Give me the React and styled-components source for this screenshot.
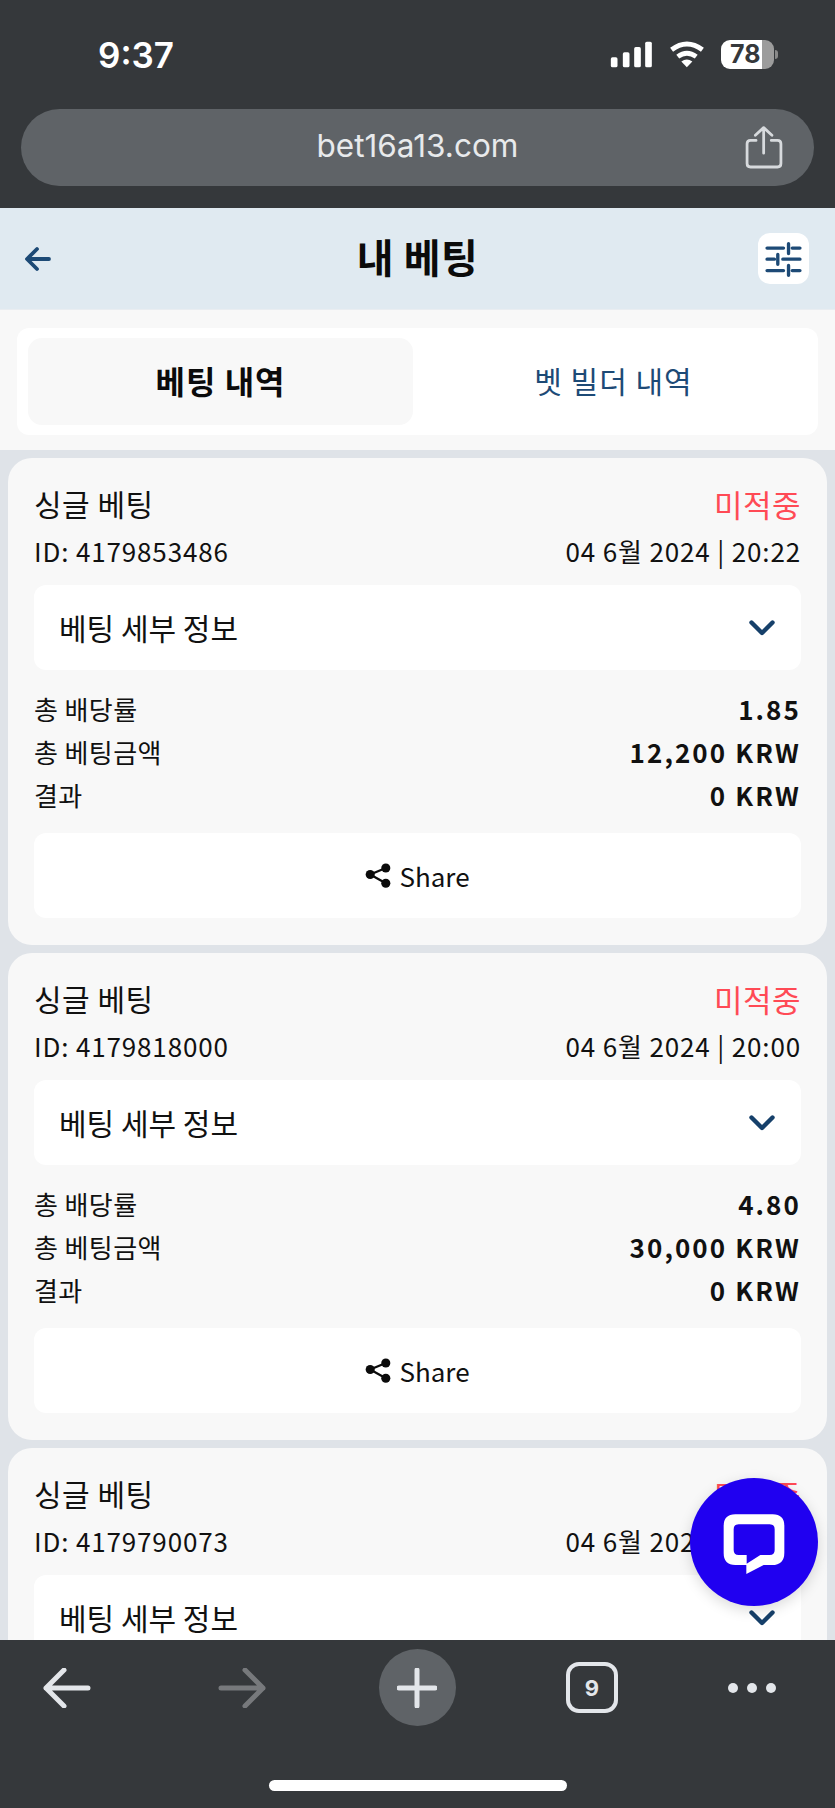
import React from 'react';
import styled, { createGlobalStyle } from 'styled-components';

const GlobalStyle = createGlobalStyle`
  html, body {
    margin: 0;
    padding: 0;
    height: 100%;
    background: #35383b;
  }
  body {
    font-family: 'Noto Sans CJK KR', 'Noto Sans', sans-serif;
    color: #111;
  }
`;

const navy = '#1d4a76';
const chrome = '#35383b';

const bets = [
  { id: '4179853486', date: '04 6월 2024 | 20:22', odds: '1.85', stake: '12,200 KRW', result: '0 KRW' },
  { id: '4179818000', date: '04 6월 2024 | 20:00', odds: '4.80', stake: '30,000 KRW', result: '0 KRW' },
  { id: '4179790073', date: '04 6월 2024 | 19:41', odds: '2.10', stake: '20,000 KRW', result: '0 KRW' },
];

const Phone = styled.div`
  position: relative;
  width: 835px;
  height: 1808px;
  display: flex;
  flex-direction: column;
  overflow: hidden;
  background: #f8f8f8;
`;

const TopChrome = styled.div`
  height: 208px;
  flex: none;
  background: ${chrome};
  padding: 0 21px;
  box-sizing: border-box;
`;

const StatusBar = styled.div`
  height: 109px;
  display: flex;
  align-items: center;
  justify-content: space-between;
  padding: 0 35px 0 77px;
`;

const Clock = styled.div`
  font-family: Inter, sans-serif;
  font-weight: 600;
  font-size: 35px;
  color: #fff;
`;

const StatusIcons = styled.div`
  display: flex;
  align-items: center;
  gap: 16px;
`;

const Battery = styled.div`
  position: relative;
  width: 53px;
  height: 29px;
  border-radius: 9px;
  background: linear-gradient(to right, #fff 78%, #9c9c9c 78%);
  font-family: Inter, sans-serif;
  font-weight: 700;
  font-size: 25px;
  line-height: 29px;
  color: ${chrome};
  padding-left: 9px;
  box-sizing: border-box;
  margin-right: 5px;
  &::after {
    content: '';
    position: absolute;
    right: -4px;
    top: 10px;
    width: 3px;
    height: 9px;
    border-radius: 0 3px 3px 0;
    background: #8a8a8a;
  }
`;

const UrlBar = styled.div`
  position: relative;
  height: 77px;
  box-sizing: border-box;
  padding-bottom: 4px;
  border-radius: 39px;
  background: #5f6367;
  display: flex;
  align-items: center;
  justify-content: center;
  font-family: Inter, sans-serif;
  font-size: 31.5px;
  color: #e8eaec;
`;

const UrlShare = styled.div`
  position: absolute;
  right: 31px;
  top: 17px;
  line-height: 0;
`;

const Header = styled.div`
  height: 102px;
  flex: none;
  background: #e0eaf1;
  display: flex;
  align-items: center;
  justify-content: space-between;
  padding: 0 26px 0 25px;
  box-sizing: border-box;
  border-bottom: 1px solid #e9edf1;
  position: relative;
`;

const Title = styled.div`
  position: absolute;
  left: 0;
  right: 0;
  top: 18px;
  text-align: center;
  font-weight: 700;
  font-size: 40px;
  line-height: 60px;
  letter-spacing: 0.5px;
  color: #0b0b0b;
`;

const FilterButton = styled.div`
  width: 51px;
  height: 51px;
  border-radius: 12px;
  background: #fff;
  display: flex;
  align-items: center;
  justify-content: center;
`;

const TabStrip = styled.div`
  flex: none;
  height: 140px;
  box-sizing: border-box;
  padding: 18px 17px 15px;
  background: #f8f8f8;
`;

const TabPanel = styled.div`
  height: 107px;
  box-sizing: border-box;
  padding: 10px 11px;
  border-radius: 12px;
  background: #fff;
  display: flex;
`;

const Tab = styled.div`
  flex: ${p => (p.$active ? '0 0 385px' : '1')};
  box-sizing: border-box;
  padding: 0 0 4px ${p => (p.$active ? '0' : '7px')};
  border-radius: 14px;
  background: ${p => (p.$active ? '#f8f8f8' : 'transparent')};
  color: ${p => (p.$active ? '#0b0b0b' : navy)};
  font-weight: ${p => (p.$active ? 700 : 400)};
  font-size: ${p => (p.$active ? '32px' : '30px')};
  letter-spacing: 1px;
  display: flex;
  align-items: center;
  justify-content: center;
`;

const Feed = styled.div`
  flex: 1;
  min-height: 0;
  overflow: hidden;
  background: #dfe3e8;
  padding: 8px;
  display: flex;
  flex-direction: column;
  gap: 8px;
`;

const Card = styled.div`
  flex: none;
  height: 487px;
  box-sizing: border-box;
  padding: 24px 26px 27px;
  background: #f8f8f8;
  border-radius: 24px;
`;

const SpacedRow = styled.div`
  display: flex;
  justify-content: space-between;
  align-items: center;
`;

const CardTitle = styled(SpacedRow)`
  height: 42px;
  font-size: 30px;
  letter-spacing: 0.5px;
`;

const Lost = styled.span`
  color: #ff4a55;
  font-size: 31px;
`;

const CardMeta = styled(SpacedRow)`
  height: 36px;
  margin-top: 8px;
  font-size: 26px;
  letter-spacing: 0.85px;
`;

const WhiteBox = styled.div`
  height: 85px;
  border-radius: 12px;
  background: #fff;
  display: flex;
  align-items: center;
`;

const Details = styled(WhiteBox)`
  margin-top: 17px;
  padding: 0 26px 0 25px;
  justify-content: space-between;
  font-size: 30px;
`;

const DetailsLabel = styled.span`
  padding-bottom: 2px;
`;

const Stats = styled.div`
  margin: 17px 0 17px;
`;

const StatRow = styled(SpacedRow)`
  height: 43px;
  font-size: 26px;
  letter-spacing: 0.4px;
`;

const StatValue = styled.span`
  font-weight: 600;
  letter-spacing: 2.1px;
`;

const ShareBox = styled(WhiteBox)`
  justify-content: center;
  gap: 8px;
  font-size: 26px;
`;

const ChatBubble = styled.div`
  position: absolute;
  left: 690px;
  top: 1478px;
  width: 128px;
  height: 128px;
  border-radius: 50%;
  background: #2000f0;
  box-shadow: 0 4px 14px rgba(0, 0, 0, 0.15);
`;

const BottomChrome = styled.div`
  flex: none;
  height: 168px;
  box-sizing: border-box;
  background: ${chrome};
  padding-top: 9px;
  display: flex;
  flex-direction: column;
  align-items: center;
`;

const ToolRow = styled.div`
  align-self: flex-start;
  display: grid;
  grid-template-columns: 134px 216px 134px 216px 104px;
  justify-items: center;
  align-items: center;
  height: 77px;
`;

const PlusButton = styled.div`
  width: 77px;
  height: 77px;
  border-radius: 50%;
  background: #5f6367;
  display: flex;
  align-items: center;
  justify-content: center;
`;

const TabCount = styled.div`
  width: 52px;
  height: 51px;
  box-sizing: border-box;
  border: 4px solid #e3e6ea;
  border-radius: 13px;
  display: flex;
  align-items: center;
  justify-content: center;
  font-family: Inter, sans-serif;
  font-weight: 700;
  font-size: 22px;
  color: #e3e6ea;
`;

const HomeIndicator = styled.div`
  width: 298px;
  height: 11px;
  border-radius: 6px;
  background: #fff;
  margin-top: 54px;
`;

const SignalIcon = () => (
  <svg width="43" height="27" viewBox="150 66 128 81" fill="#fff">
    <rect x="152" y="115" width="20" height="30" rx="5" />
    <rect x="188" y="100" width="20" height="45" rx="5" />
    <rect x="222" y="84" width="20" height="61" rx="5" />
    <rect x="255" y="68" width="20" height="77" rx="5" />
  </svg>
);

const WifiIcon = () => (
  <svg width="36" height="27" viewBox="323 66 111 81" fill="none" stroke="#fff" strokeWidth="15">
    <path d="M331 92 Q378 56 426 92" />
    <path d="M350 113 Q378 92 407 113" />
    <path d="M361 128 L378 146 L395 128 Q378 116 361 128 Z" fill="#fff" stroke="none" />
  </svg>
);

const UpShareIcon = () => (
  <svg width="38" height="44" viewBox="556 326 110 126" fill="none" stroke="#d7dadd" strokeWidth="8" strokeLinecap="round" strokeLinejoin="round">
    <path d="M588 367 H572 Q562 367 562 377 V434 Q562 444 572 444 H650 Q660 444 660 434 V377 Q660 367 650 367 H632" />
    <path d="M610 404 V332 M586 352 L610 330 L634 352" />
  </svg>
);

const BackIcon = () => (
  <svg width="26" height="26" viewBox="0 0 26 26" fill="none" stroke={navy} strokeWidth="3.8" strokeLinecap="round" strokeLinejoin="round">
    <path d="M24 13 H3 M12 3 L2 13 L12 23" />
  </svg>
);

const FilterIcon = () => (
  <svg width="51" height="51" viewBox="55 38 152 152" fill="none" stroke={navy} strokeWidth="10" strokeLinecap="round">
    <path d="M82 83 H131 M157 83 H180 M82 116 H104 M129 116 H180 M82 150 H131 M157 150 H180" />
    <path d="M146 70 V99 M114 102 V131 M146 135 V164" />
  </svg>
);

const ChevronIcon = () => (
  <svg width="26" height="16" viewBox="0 0 26 16" fill="none" stroke="#16406a" strokeWidth="4.4" strokeLinecap="round" strokeLinejoin="round">
    <path d="M2.5 2.5 L13 13 L23.5 2.5" />
  </svg>
);

const ShareIcon = () => (
  <svg width="26" height="25" viewBox="46 40 80 76" fill="#0b0b0b" stroke="#0b0b0b">
    <path d="M62 75 L110 55 M62 75 L110 102" strokeWidth="7" />
    <circle cx="62" cy="75" r="14" stroke="none" />
    <circle cx="110" cy="55" r="14" stroke="none" />
    <circle cx="110" cy="102" r="14" stroke="none" />
  </svg>
);

const ChatIcon = () => (
  <svg width="128" height="128" viewBox="15 24 382 384">
    <path
      fillRule="evenodd"
      fill="#fff"
      d="M150 133 H262 Q297 133 297 168 V248 Q297 285 260 285 H235 L183 312 V285 H150 Q115 285 115 250 V168 Q115 133 150 133 Z M160 163 Q145 163 145 178 V240 Q145 255 160 255 H184 V281 L225 255 H253 Q268 255 268 240 V178 Q268 163 253 163 Z"
    />
  </svg>
);

const ToolArrow = ({ flip, color }) => (
  <svg width="48" height="40" viewBox="0 0 48 40" fill="none" stroke={color} strokeWidth="5" strokeLinecap="round" strokeLinejoin="round" style={flip ? { transform: 'scaleX(-1)' } : undefined}>
    <path d="M45 20 H3 M21 2 L3 20 L21 38" />
  </svg>
);

const PlusIcon = () => (
  <svg width="40" height="40" viewBox="0 0 40 40" fill="none" stroke="#e3e6ea" strokeWidth="5" strokeLinecap="round">
    <path d="M20 2 V38 M2 20 H38" />
  </svg>
);

const DotsIcon = () => (
  <svg width="48" height="12" viewBox="0 0 48 12" fill="#e3e6ea">
    <circle cx="5" cy="6" r="5" />
    <circle cx="24" cy="6" r="5" />
    <circle cx="43" cy="6" r="5" />
  </svg>
);

const BetCard = ({ bet }) => (
  <Card>
    <CardTitle>
      <span>싱글 베팅</span>
      <Lost>미적중</Lost>
    </CardTitle>
    <CardMeta>
      <span>ID: {bet.id}</span>
      <span>{bet.date}</span>
    </CardMeta>
    <Details>
      <DetailsLabel>베팅 세부 정보</DetailsLabel>
      <ChevronIcon />
    </Details>
    <Stats>
      <StatRow><span>총 배당률</span><StatValue>{bet.odds}</StatValue></StatRow>
      <StatRow><span>총 베팅금액</span><StatValue>{bet.stake}</StatValue></StatRow>
      <StatRow><span>결과</span><StatValue>{bet.result}</StatValue></StatRow>
    </Stats>
    <ShareBox>
      <ShareIcon />
      <span>Share</span>
    </ShareBox>
  </Card>
);

export default function App() {
  return (
    <Phone>
      <GlobalStyle />
      <TopChrome>
        <StatusBar>
          <Clock>9:37</Clock>
          <StatusIcons>
            <SignalIcon />
            <WifiIcon />
            <Battery>78</Battery>
          </StatusIcons>
        </StatusBar>
        <UrlBar>
          bet16a13.com
          <UrlShare><UpShareIcon /></UrlShare>
        </UrlBar>
      </TopChrome>
      <Header>
        <BackIcon />
        <Title>내 베팅</Title>
        <FilterButton><FilterIcon /></FilterButton>
      </Header>
      <TabStrip>
        <TabPanel>
          <Tab $active>베팅 내역</Tab>
          <Tab>벳 빌더 내역</Tab>
        </TabPanel>
      </TabStrip>
      <Feed>
        {bets.map(bet => <BetCard key={bet.id} bet={bet} />)}
      </Feed>
      <BottomChrome>
        <ToolRow>
          <ToolArrow color="#e3e6ea" />
          <ToolArrow flip color="#77797c" />
          <PlusButton><PlusIcon /></PlusButton>
          <TabCount>9</TabCount>
          <DotsIcon />
        </ToolRow>
        <HomeIndicator />
      </BottomChrome>
      <ChatBubble><ChatIcon /></ChatBubble>
    </Phone>
  );
}
